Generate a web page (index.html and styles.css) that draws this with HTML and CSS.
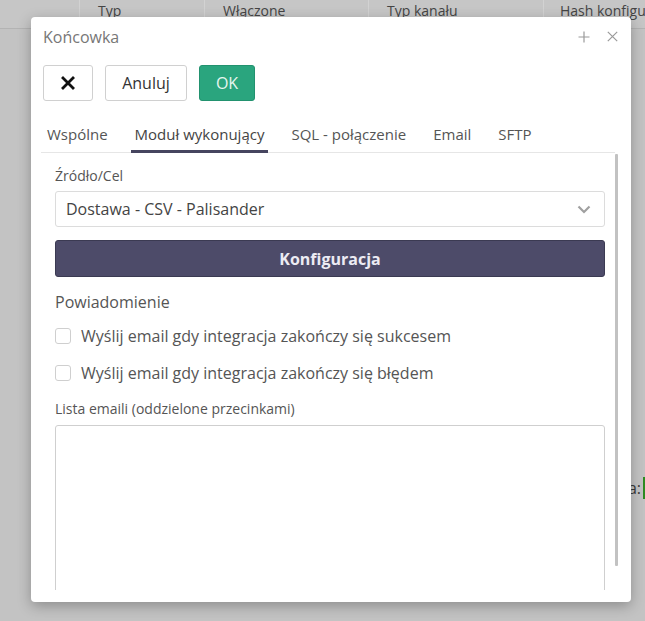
FILE: index.html
```html
<!DOCTYPE html>
<html lang="pl">
<head>
<meta charset="utf-8">
<title>Końcowka</title>
<link rel="stylesheet" href="styles.css">
</head>
<body>
<div class="page">
  <div class="grid-header">
    <div class="col c0"></div>
    <div class="col c1">Typ</div>
    <div class="col c2">Włączone</div>
    <div class="col c3">Typ kanału</div>
    <div class="col c4">Hash konfiguracji</div>
  </div>
  <div class="page-body">
    <div class="bg-row">
      <span class="bg-label">Nazwa:</span>
      <span class="bg-input"></span>
    </div>
  </div>
</div>

<div class="dialog">
  <div class="dlg-title">
    <span class="title-text">Końcowka</span>
    <div class="title-icons">
      <svg width="12" height="12" viewBox="0 0 12 12"><path d="M6 0.5V11.5M0.5 6H11.5" stroke="#9a9a9a" stroke-width="1.2" fill="none"/></svg>
      <svg width="11" height="11" viewBox="0 0 11 11"><path d="M0.8 0.8L10.2 10.2M10.2 0.8L0.8 10.2" stroke="#9a9a9a" stroke-width="1.2" fill="none"/></svg>
    </div>
  </div>
  <div class="toolbar">
    <button class="btn btn-x"><svg width="14" height="14" viewBox="0 0 14 14"><path d="M2 2L12 12M12 2L2 12" stroke="#111" stroke-width="2.8" stroke-linecap="square" fill="none"/></svg></button>
    <button class="btn btn-cancel">Anuluj</button>
    <button class="btn btn-ok">OK</button>
  </div>
  <div class="tabs">
    <span class="tab">Wspólne</span>
    <span class="tab active">Moduł wykonujący</span>
    <span class="tab">SQL - połączenie</span>
    <span class="tab">Email</span>
    <span class="tab">SFTP</span>
  </div>
  <div class="scroll-area">
    <div class="content">
      <label class="field-label">Źródło/Cel</label>
      <div class="select">
        <span>Dostawa - CSV - Palisander</span>
        <svg width="14" height="9" viewBox="0 0 14 9"><path d="M1.5 1.5L7 7L12.5 1.5" stroke="#a0a0a0" stroke-width="2.2" fill="none"/></svg>
      </div>
      <button class="btn-config">Konfiguracja</button>
      <div class="section-title">Powiadomienie</div>
      <label class="check"><span class="box"></span>Wyślij email gdy integracja zakończy się sukcesem</label>
      <label class="check"><span class="box"></span>Wyślij email gdy integracja zakończy się błędem</label>
      <label class="field-label emails">Lista emaili (oddzielone przecinkami)</label>
      <div class="textarea"></div>
    </div>
    <div class="scrollbar"><div class="thumb"></div></div>
  </div>
</div>
</body>
</html>
```

FILE: styles.css
```css
* { box-sizing: border-box; }
html, body { margin: 0; padding: 0; }
body {
  width: 645px;
  height: 621px;
  overflow: hidden;
  background: #c3c3c3;
  font-family: "Open Sans", "Noto Sans", sans-serif;
  position: relative;
}
.page { width: 645px; }
.grid-header {
  display: flex;
  height: 29px;
  background: #c6c6c6;
  border-bottom: 1px solid #b3b3b3;
  white-space: nowrap;
}
.col {
  border-right: 1px solid #d2d2d2;
  font-size: 14px;
  color: #444;
  padding-left: 18px;
  line-height: 22px;
  overflow: hidden;
}
.c0 { width: 80px; padding: 0; }
.c1 { width: 125px; }
.c2 { width: 164px; }
.c3 { width: 175px; }
.c4 { flex: 1; border-right: none; padding-left: 16px; }
.page-body { padding-top: 448px; }
.bg-row { display: flex; align-items: center; height: 22px; }
.bg-label {
  width: 641px;
  text-align: right;
  font-size: 16px;
  color: #3a3a3a;
  flex: none;
}
.bg-input {
  width: 20px;
  height: 22px;
  border-left: 2px solid #2e8b22;
  margin-left: 2px;
  flex: none;
}

.dialog {
  position: absolute;
  left: 31px;
  top: 17px;
  width: 600px;
  height: 585px;
  background: #fff;
  border-radius: 4px;
  box-shadow: 0 4px 14px rgba(0,0,0,0.28);
  display: flex;
  flex-direction: column;
  padding-bottom: 12px;
}
.dlg-title {
  height: 38px;
  display: flex;
  align-items: center;
  justify-content: space-between;
  padding: 1px 12px 0 12px;
}
.title-text { font-size: 16px; color: #777; }
.title-icons { display: flex; align-items: center; gap: 17px; margin-right: 1px; }
.toolbar {
  display: flex;
  gap: 12px;
  padding: 10px 12px 0 12px;
  height: 46px;
}
.btn {
  height: 36px;
  border: 1px solid #d0d0d0;
  border-radius: 3px;
  background: #fff;
  font-family: "Open Sans", sans-serif;
  font-size: 16px;
  color: #333;
  padding: 0;
  display: flex;
  align-items: center;
  justify-content: center;
}
.btn-x { width: 50px; }
.btn-cancel { width: 82px; }
.btn-ok {
  width: 56px;
  background: #2aa57e;
  border-color: #22926f;
  color: #e6f6f0;
}
.tabs {
  display: flex;
  gap: 19px;
  margin: 19px 16px 0 10px;
  padding-left: 2px;
  border-bottom: 1px solid #e6e6e6;
  height: 33px;
  width: 574px;
}
.tab {
  padding: 4px 4px 0 4px;
  font-size: 15px;
  color: #555;
  height: 33px;
  border-bottom: 3px solid transparent;
  margin-bottom: -1px;
}
.tab.active { border-bottom-color: #46455f; color: #444; }

.scroll-area {
  flex: 1;
  display: flex;
  overflow: hidden;
  margin-left: 10px;
  margin-right: 12px;
}
.content {
  flex: 1;
  padding: 13px 10px 0 14px;
  overflow: hidden;
}
.scrollbar { width: 4px; padding-top: 1px; }
.thumb { width: 3px; height: 412px; background: #c2c2c2; border-radius: 1px; }

.field-label {
  display: block;
  font-size: 14px;
  color: #555;
  line-height: 20px;
}
.select {
  margin-top: 5px;
  height: 36px;
  border: 1px solid #dcdcdc;
  border-radius: 3px;
  display: flex;
  align-items: center;
  justify-content: space-between;
  padding: 0 13px 0 10px;
  font-size: 16px;
  color: #444;
}
.btn-config {
  display: block;
  width: 100%;
  margin-top: 13px;
  height: 37px;
  background: #4d4b69;
  border: 1px solid #3b3a52;
  border-radius: 3px;
  color: #ecebf3;
  font-family: "Open Sans", sans-serif;
  font-weight: 700;
  font-size: 16px;
}
.section-title {
  margin-top: 14px;
  font-size: 16px;
  color: #555;
  line-height: 22px;
}
.check {
  display: flex;
  align-items: center;
  gap: 10px;
  font-size: 16px;
  color: #555;
  height: 22px;
  margin-top: 12px;
}
.check + .check { margin-top: 15px; }
.box {
  width: 16px;
  height: 16px;
  border: 1px solid #cfcfcf;
  border-radius: 3px;
  background: #fff;
  flex: none;
}
.field-label.emails { margin-top: 15px; }
.textarea {
  margin-top: 6px;
  height: 200px;
  border: 1px solid #cfcfcf;
  border-radius: 3px;
}
```
